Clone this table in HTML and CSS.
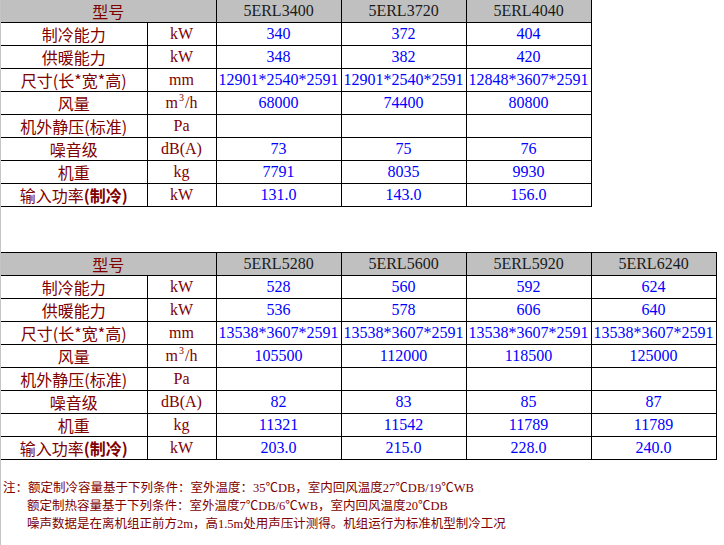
FILE: index.html
```html
<!DOCTYPE html>
<html lang="zh-CN">
<head>
<meta charset="utf-8">
<title>5ERL 规格参数</title>
<link rel="stylesheet" href="styles.css">
</head>
<body>
<div class="page">
  <table class="spec spec-first">
    <colgroup>
      <col class="c-label"><col class="c-unit"><col class="c-data"><col class="c-data"><col class="c-data">
    </colgroup>
    <tr class="head">
      <td colspan="2" class="lbl">型号</td>
      <td>5ERL3400</td><td>5ERL3720</td><td>5ERL4040</td>
    </tr>
    <tr><td class="lbl">制冷能力</td><td class="unit">kW</td><td class="val">340</td><td class="val">372</td><td class="val">404</td></tr>
    <tr><td class="lbl">供暖能力</td><td class="unit">kW</td><td class="val">348</td><td class="val">382</td><td class="val">420</td></tr>
    <tr><td class="lbl">尺寸(长*宽*高)</td><td class="unit">mm</td><td class="val">12901*2540*2591</td><td class="val">12901*2540*2591</td><td class="val">12848*3607*2591</td></tr>
    <tr><td class="lbl">风量</td><td class="unit">m<sup>3</sup>/h</td><td class="val">68000</td><td class="val">74400</td><td class="val">80800</td></tr>
    <tr><td class="lbl">机外静压(标准)</td><td class="unit">Pa</td><td class="val"></td><td class="val"></td><td class="val"></td></tr>
    <tr><td class="lbl">噪音级</td><td class="unit">dB(A)</td><td class="val">73</td><td class="val">75</td><td class="val">76</td></tr>
    <tr><td class="lbl">机重</td><td class="unit">kg</td><td class="val">7791</td><td class="val">8035</td><td class="val">9930</td></tr>
    <tr><td class="lbl">输入功率<b>(制冷)</b></td><td class="unit">kW</td><td class="val">131.0</td><td class="val">143.0</td><td class="val">156.0</td></tr>
  </table>

  <table class="spec spec-second">
    <colgroup>
      <col class="c-label"><col class="c-unit"><col class="c-data"><col class="c-data"><col class="c-data"><col class="c-data">
    </colgroup>
    <tr class="head">
      <td colspan="2" class="lbl">型号</td>
      <td>5ERL5280</td><td>5ERL5600</td><td>5ERL5920</td><td>5ERL6240</td>
    </tr>
    <tr><td class="lbl">制冷能力</td><td class="unit">kW</td><td class="val">528</td><td class="val">560</td><td class="val">592</td><td class="val">624</td></tr>
    <tr><td class="lbl">供暖能力</td><td class="unit">kW</td><td class="val">536</td><td class="val">578</td><td class="val">606</td><td class="val">640</td></tr>
    <tr><td class="lbl">尺寸(长*宽*高)</td><td class="unit">mm</td><td class="val">13538*3607*2591</td><td class="val">13538*3607*2591</td><td class="val">13538*3607*2591</td><td class="val">13538*3607*2591</td></tr>
    <tr><td class="lbl">风量</td><td class="unit">m<sup>3</sup>/h</td><td class="val">105500</td><td class="val">112000</td><td class="val">118500</td><td class="val">125000</td></tr>
    <tr><td class="lbl">机外静压(标准)</td><td class="unit">Pa</td><td class="val"></td><td class="val"></td><td class="val"></td><td class="val"></td></tr>
    <tr><td class="lbl">噪音级</td><td class="unit">dB(A)</td><td class="val">82</td><td class="val">83</td><td class="val">85</td><td class="val">87</td></tr>
    <tr><td class="lbl">机重</td><td class="unit">kg</td><td class="val">11321</td><td class="val">11542</td><td class="val">11789</td><td class="val">11789</td></tr>
    <tr><td class="lbl">输入功率<b>(制冷)</b></td><td class="unit">kW</td><td class="val">203.0</td><td class="val">215.0</td><td class="val">228.0</td><td class="val">240.0</td></tr>
  </table>

  <div class="notes">
    <p>注：额定制冷容量基于下列条件：室外温度：35℃DB，室内回风温度27℃DB/19℃WB</p>
    <p class="indent">额定制热容量基于下列条件：室外温度7℃DB/6℃WB，室内回风温度20℃DB</p>
    <p class="indent">噪声数据是在离机组正前方2m，高1.5m处用声压计测得。机组运行为标准机型制冷工况</p>
  </div>
</div>
</body>
</html>
```

FILE: styles.css
```css
html, body {
  margin: 0;
  padding: 0;
  background: #fff;
}

body {
  font-family: "Liberation Serif", "Noto Sans CJK SC", serif;
}

.page {
  border-left: 1px solid #c4c4c4;
  min-height: 545px;
  box-sizing: border-box;
}

.spec {
  border-collapse: collapse;
  table-layout: fixed;
  font-size: 16px;
}

.spec td {
  border: 1px solid #000;
  height: 22px;
  padding: 0;
  text-align: center;
  vertical-align: middle;
  white-space: nowrap;
  line-height: 20px;
  overflow: hidden;
}

.spec td:first-child {
  border-left: none;
}

.spec-first tr:first-child td {
  border-top: none;
}

.spec-second {
  margin-top: 45px;
}

.c-label { width: 146px; }
.c-unit { width: 69px; }
.c-data { width: 125px; }

.spec-first { width: 590px; }
.spec-second { width: 715px; }

.head td {
  background: #c0c0c0;
  color: #1a1a1a;
}

.lbl {
  color: #800000;
  font-family: "Noto Sans CJK SC", sans-serif;
}

.head .lbl {
  color: #800000;
}

.unit {
  color: #800000;
}

.unit sup {
  font-size: 10px;
  line-height: 0;
  vertical-align: 7px;
  margin: 0 1px;
}

.val {
  color: #0000ff;
}

.notes {
  margin-top: 19px;
  color: #800000;
  font-size: 12.5px;
  line-height: 18px;
  padding-left: 2px;
}

.notes p {
  margin: 0;
  white-space: nowrap;
}

.notes .indent {
  padding-left: 24px;
}
```
